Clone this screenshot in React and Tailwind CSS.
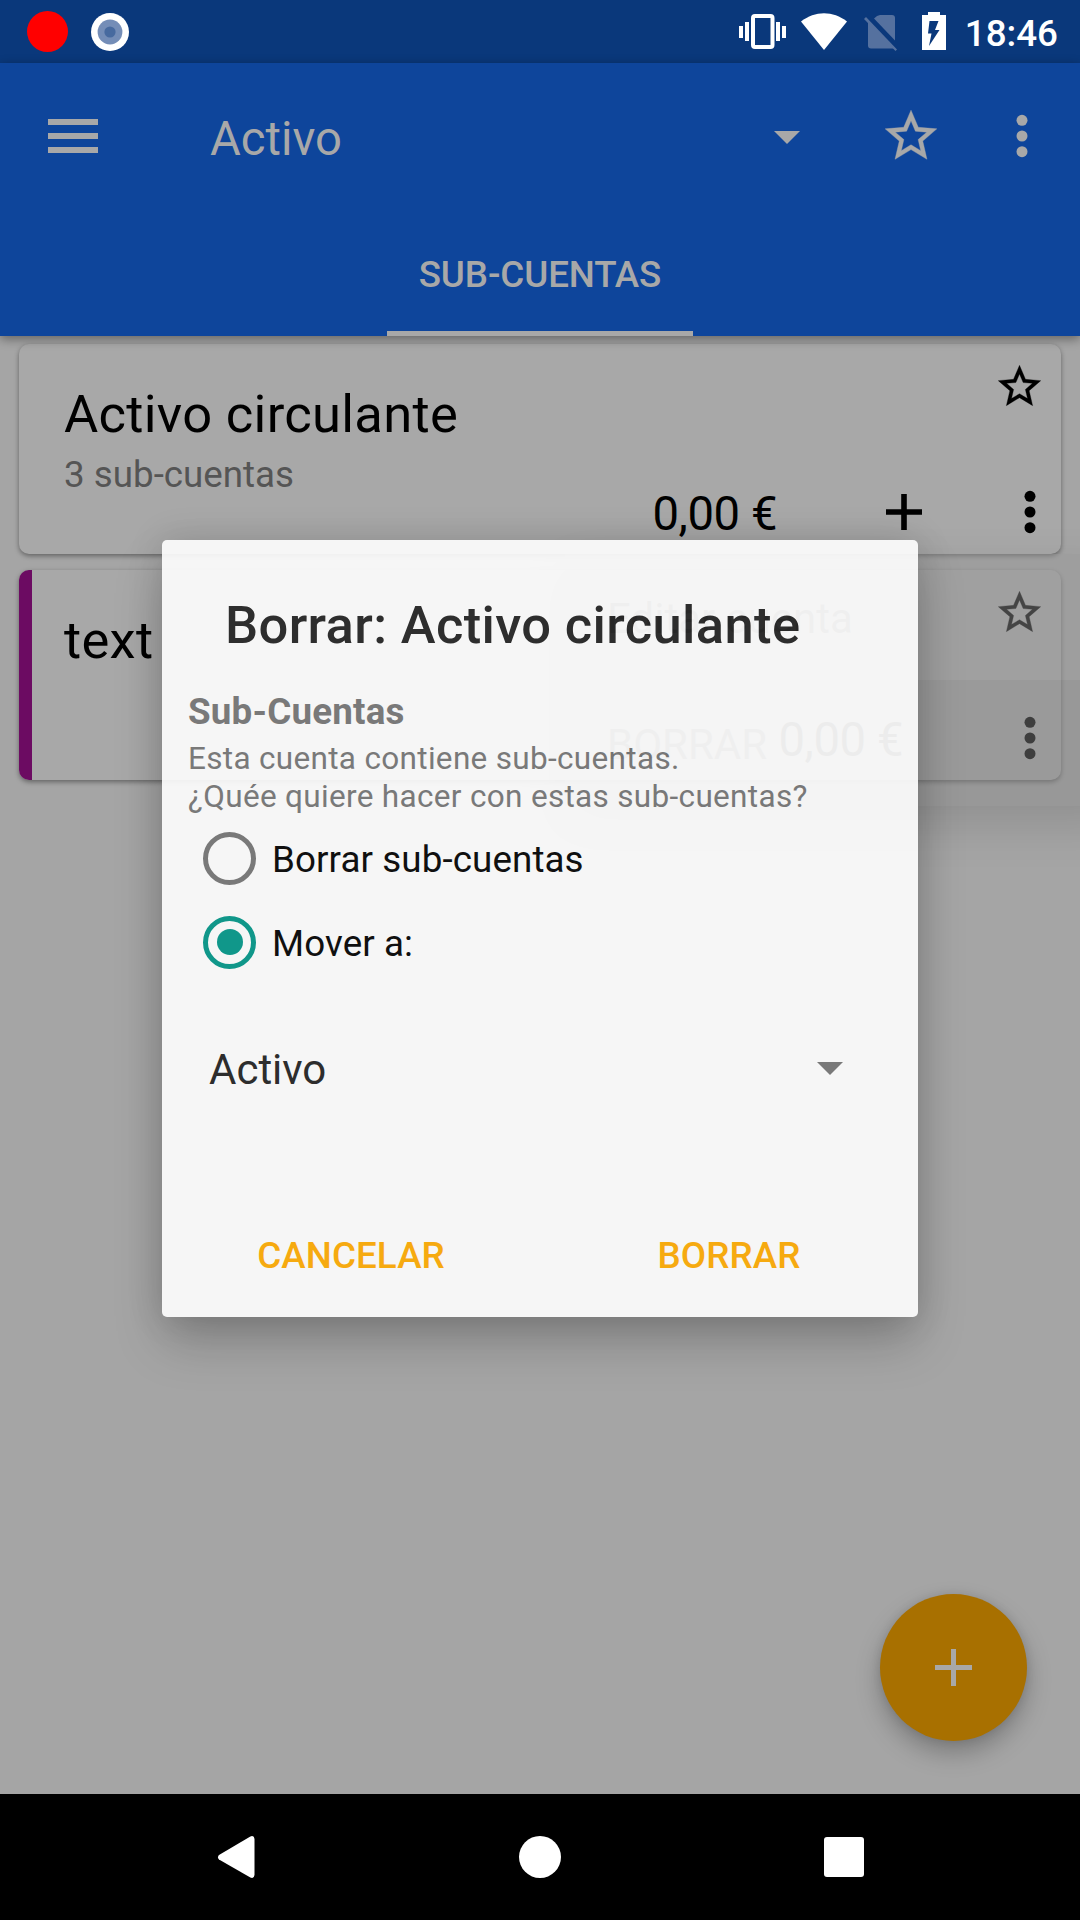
import React from "react";

const STAR =
  "M22 9.24l-7.19-.62L12 2 9.19 8.63 2 9.24l5.46 4.73L5.82 21 12 17.27 18.18 21l-1.63-7.03L22 9.24zM12 15.4l-3.76 2.27 1-4.28-3.32-2.88 4.38-.38L12 6.1l1.71 4.04 4.38.38-3.32 2.88 1 4.28L12 15.4z";

function Star({ className }) {
  return (
    <svg viewBox="0 0 24 24" className={className} fill="currentColor">
      <path d={STAR} stroke="currentColor" strokeWidth="0.15" />
    </svg>
  );
}

function Dots({ className }) {
  return (
    <svg viewBox="0 0 12 44" className={className} fill="currentColor">
      <circle cx="6" cy="6.3" r="5.5" />
      <circle cx="6" cy="22" r="5.5" />
      <circle cx="6" cy="37.7" r="5.5" />
    </svg>
  );
}

function Caret({ className }) {
  return (
    <svg viewBox="0 0 26 13" className={className} fill="currentColor">
      <path d="M0 0h26L13 13z" />
    </svg>
  );
}

function StatusBar() {
  return (
    <div className="flex h-[63px] items-center bg-[#0a387b] pl-[27px] pr-[21px] text-white">
      <div className="h-[41px] w-[41px] rounded-full bg-[#ff0000]" />
      <svg viewBox="0 0 38 38" className="ml-[23px] h-[38px] w-[38px]">
        <circle cx="19" cy="19" r="19" fill="#fff" />
        <circle cx="19" cy="19" r="12.4" fill="#748db7" />
        <circle cx="19" cy="19" r="5.6" fill="#476a9f" />
      </svg>
      <svg viewBox="739 0 210 63" className="ml-auto h-[63px] w-[210px]" fill="#fff">
        <path d="M739 26h4v12h-4zM745 22h4v19h-4zM776 22h4v19h-4zM782 26h4v12h-4z" />
        <rect x="753" y="16" width="19.500" height="31" rx="2" fill="none" stroke="#fff" strokeWidth="4" />
        <path d="M801 21.500C815 10.500 833 10.500 847 21.500L824 50z" />
        <g fill="#55719f">
          <path d="M874 18.500Q877 15 880 15H892Q895 15 895 18V40.500z" />
          <path d="M868 22V45.500Q868 48.500 871 48.500H892.500Q894 48.500 894.500 48z" />
          <path d="M866 17L897 49.500L895.500 51L864 19z" />
        </g>
        <path
          fillRule="evenodd"
          d="M928 12H940V15H946V50H922V15H928zM929.500 21L928 33.500H931.500L929 46L939.500 30H935L938.500 21z"
        />
      </svg>
      <div className="ml-[16px] mr-px pt-1.5 text-[36.75px] leading-none font-medium">18:46</div>
    </div>
  );
}

function AppBar() {
  return (
    <div className="relative z-10 h-[273px] bg-[#0e459b] text-[#a8a8a8] shadow-[0_3px_10px_rgba(0,0,0,0.4)]">
      <div className="flex h-[147px] items-center pl-12">
        <div className="mt-[-1px] flex w-[50px] flex-col gap-2">
          <div className="h-1.5 bg-[#a8a8a8]" />
          <div className="h-1.5 bg-[#a8a8a8]" />
          <div className="h-1.5 bg-[#a8a8a8]" />
        </div>
        <div className="ml-[112px] w-[564px] pt-1.5 text-[47.25px] leading-none">Activo</div>
        <Caret className="mt-0.5 h-[13px] w-[26px] shrink-0" />
        <Star className="mb-0.5 ml-[80px] h-[62px] w-[62px] shrink-0" />
        <Dots className="mb-0.5 ml-[74px] h-11 w-3 shrink-0" />
      </div>
      <div className="flex justify-center">
        <div className="flex h-[126px] w-[306px] items-center justify-center border-b-[5px] border-[#a8a8a8] pt-2 text-[36.75px] font-medium tracking-[-0.1px]">
          SUB-CUENTAS
        </div>
      </div>
    </div>
  );
}

function Account({ name, detail, striped }) {
  return (
    <div className="flex h-[210px] overflow-hidden rounded-[10px] bg-[#a8a8a8] text-black shadow-[0_2px_5px_rgba(0,0,0,0.4)]">
      <div className={striped ? "w-[13px] bg-[#6c0b62]" : "w-[13px]"} />
      <div className="flex flex-1 flex-col pl-8 pr-[15px]">
        <div className="flex h-[146px] justify-between">
          <div className="pt-10">
            <div className="text-[52.5px] leading-[61px] tracking-[0.3px]">{name}</div>
            <div className="text-[36.75px] leading-[60px] text-[#555555]">{detail}</div>
          </div>
          <Star className="mr-[1.500px] mt-[17px] h-[51px] w-[51px]" />
        </div>
        <div className="flex h-[43px] items-center justify-end pr-[10px]">
          <div className="pt-[7px] text-[47.25px] leading-none tracking-[-0.45px]">0,00 €</div>
          {!striped && (
            <svg viewBox="0 0 36 36" className="ml-[109px] h-9 w-9" fill="currentColor">
              <path d="M15.200 0h5.600v15.200H36v5.600H20.800V36h-5.600V20.800H0v-5.600h15.200z" />
            </svg>
          )}
          <Dots className={striped ? "ml-[121px] h-11 w-3" : "ml-[102px] h-11 w-3"} />
        </div>
      </div>
    </div>
  );
}

/* Context menu caught halfway through its fade-out. */
function FadingMenu() {
  return (
    <div className="absolute -right-10 left-[565px] top-[554px] text-[42px] text-[#606060] shadow-[0_18px_44px_rgba(0,0,0,0.13)]">
      <div className="flex h-[126px] items-center bg-[#969696]/45 pl-[42px] pt-0.5">Editar cuenta</div>
      <div className="flex h-[126px] items-center bg-[#8a8a8a]/45 pl-[42px] pt-0.5">BORRAR</div>
    </div>
  );
}

function Radio({ label, checked }) {
  return (
    <div className="flex h-[84px] items-center text-[36.75px] tracking-[0.1px] text-black">
      <div
        className={
          checked
            ? "flex h-[53px] w-[53px] items-center justify-center rounded-full border-[5px] border-[#009688]"
            : "h-[53px] w-[53px] rounded-full border-[5px] border-[#757575]"
        }
      >
        {checked && <div className="h-[26px] w-[26px] rounded-full bg-[#009688]" />}
      </div>
      <div className="ml-4 pt-1">{label}</div>
    </div>
  );
}

function Dialog() {
  return (
    <div className="absolute left-[162px] top-[540px] h-[777px] w-[756px] rounded-[5px] bg-white opacity-90 shadow-[0_26px_50px_-4px_rgba(0,0,0,0.25),0_0_36px_rgba(0,0,0,0.14)]">
      <div className="pl-[63px] pt-[54px] text-[52.5px] leading-[62px] font-medium tracking-[0.36px] text-[#212121]">
        Borrar: Activo circulante
      </div>
      <div className="mt-[34px] pl-[26px] text-[#757575]">
        <div className="text-[36.75px] leading-[43px] font-bold tracking-[0.2px]">Sub-Cuentas</div>
        <div className="mt-[7px] text-[31.5px] leading-[38px] tracking-[0.32px]">
          Esta cuenta contiene sub-cuentas.
          <br />
          ¿Quée quiere hacer con estas sub-cuentas?
        </div>
      </div>
      <div className="pl-[41px]">
        <Radio label="Borrar sub-cuentas" />
        <Radio label="Mover a:" checked />
      </div>
      <div className="mt-[56px] flex items-center justify-between pl-[47px] pr-[75px] text-[42px] leading-[60px] text-[#212121]">
        <div>Activo</div>
        <Caret className="mb-[3px] h-[13px] w-[26px] text-[#757575]" />
      </div>
      <div className="mt-[126px] flex text-[36.75px] leading-[60px] font-medium tracking-[0.1px] text-[#ffab00]">
        <div className="w-[378px] text-center">CANCELAR</div>
        <div className="w-[378px] text-center">BORRAR</div>
      </div>
    </div>
  );
}

function NavBar() {
  return (
    <div className="flex h-[126px] items-center justify-between bg-black pl-[217px] pr-[216px]">
      <svg viewBox="0 0 38 44" className="h-11 w-[38px]" fill="#fff">
        <path d="M2 20L32.500 2Q37 -0.500 37.500 4V40Q37 44.500 32.500 42L2 24.500Q0 22 2 20z" />
      </svg>
      <div className="h-[42px] w-[42px] rounded-full bg-white" />
      <div className="h-10 w-10 rounded-[3px] bg-white" />
    </div>
  );
}

export default function App() {
  return (
    <div className="relative flex h-[1920px] w-[1080px] flex-col overflow-hidden bg-[#a5a5a5] font-['Roboto',sans-serif]">
      <StatusBar />
      <AppBar />
      <div className="flex flex-1 flex-col gap-4 px-[19px] pt-2">
        <Account name="Activo circulante" detail="3 sub-cuentas" />
        <Account name="text" striped />
      </div>
      <NavBar />
      <div className="absolute left-[880px] top-[1594px] flex h-[147px] w-[147px] items-center justify-center rounded-full bg-[#a87000] shadow-[0_12px_24px_rgba(0,0,0,0.25),0_0_10px_rgba(0,0,0,0.1)]">
        <svg viewBox="0 0 37 37" className="h-[37px] w-[37px]" fill="#a8a8a8">
          <path d="M16 0h5v16h16v5H21v16h-5V21H0v-5h16z" />
        </svg>
      </div>
      <FadingMenu />
      <Dialog />
    </div>
  );
}
